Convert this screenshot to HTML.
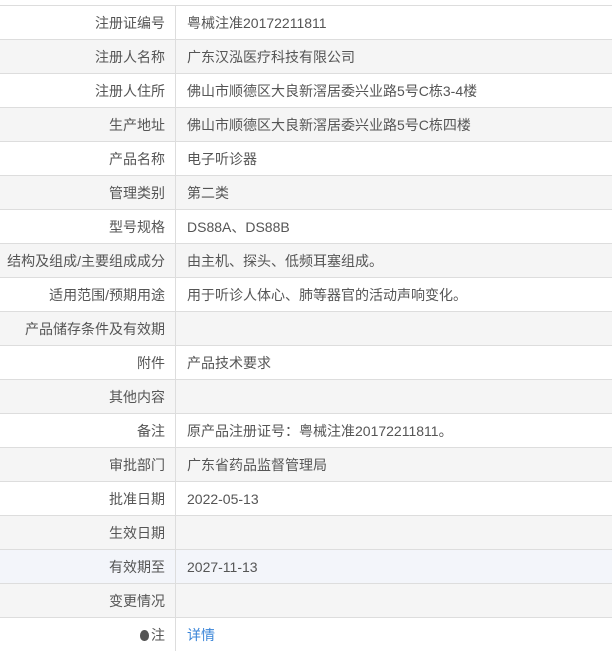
<!DOCTYPE html>
<html><head><meta charset="utf-8"><style>
body{margin:0;background:#fff;font-family:"Liberation Sans","Noto Sans CJK SC",sans-serif;font-size:14px;color:#555;}
table{position:absolute;top:5px;left:0;width:612px;border-collapse:collapse;}
td{height:32px;border-top:1px solid #ddd;padding:1px 0 0 0;line-height:32px;}
td.l{width:165px;text-align:right;padding-right:10px;border-right:1px solid #ddd;}
td.v{padding-left:11px;}
tr:nth-child(even) td{background:#f5f5f5;}
tr.h td{background:#f3f5fa;}
a{color:#3a85d8;text-decoration:none;}
.b{display:inline-block;width:9px;height:11px;border-radius:50% 50% 45% 45%;background:#555;vertical-align:-1px;margin-right:2px;}
</style></head><body>
<table>
<tr><td class="l">注册证编号</td><td class="v">粤械注准20172211811</td></tr>
<tr><td class="l">注册人名称</td><td class="v">广东汉泓医疗科技有限公司</td></tr>
<tr><td class="l">注册人住所</td><td class="v">佛山市顺德区大良新滘居委兴业路5号C栋3-4楼</td></tr>
<tr><td class="l">生产地址</td><td class="v">佛山市顺德区大良新滘居委兴业路5号C栋四楼</td></tr>
<tr><td class="l">产品名称</td><td class="v">电子听诊器</td></tr>
<tr><td class="l">管理类别</td><td class="v">第二类</td></tr>
<tr><td class="l">型号规格</td><td class="v">DS88A、DS88B</td></tr>
<tr><td class="l">结构及组成/主要组成成分</td><td class="v">由主机、探头、低频耳塞组成。</td></tr>
<tr><td class="l">适用范围/预期用途</td><td class="v">用于听诊人体心、肺等器官的活动声响变化。</td></tr>
<tr><td class="l">产品储存条件及有效期</td><td class="v"></td></tr>
<tr><td class="l">附件</td><td class="v">产品技术要求</td></tr>
<tr><td class="l">其他内容</td><td class="v"></td></tr>
<tr><td class="l">备注</td><td class="v">原产品注册证号：粤械注准20172211811。</td></tr>
<tr><td class="l">审批部门</td><td class="v">广东省药品监督管理局</td></tr>
<tr><td class="l">批准日期</td><td class="v">2022-05-13</td></tr>
<tr><td class="l">生效日期</td><td class="v"></td></tr>
<tr class="h"><td class="l">有效期至</td><td class="v">2027-11-13</td></tr>
<tr><td class="l">变更情况</td><td class="v"></td></tr>
<tr><td class="l"><span class="b"></span>注</td><td class="v"><a>详情</a></td></tr>
</table>
</body></html>
